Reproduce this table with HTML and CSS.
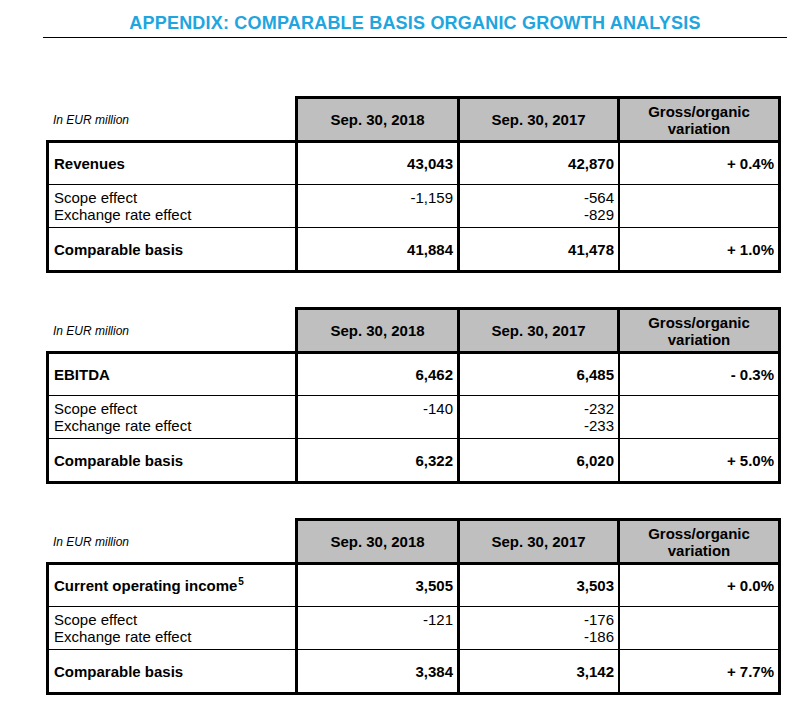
FILE: index.html
```html
<!DOCTYPE html>
<html lang="en">
<head>
<meta charset="utf-8">
<title>Appendix: Comparable basis organic growth analysis</title>
<link rel="stylesheet" href="styles.css">
</head>
<body>
<header class="title-bar">
  <h1>APPENDIX: COMPARABLE BASIS ORGANIC GROWTH ANALYSIS</h1>
</header>
<main class="tables">
  <section class="fig">
    <div class="head">
      <div class="unit">In EUR million</div>
      <div class="head-box">
        <div class="hc">Sep. 30, 2018</div>
        <div class="hc">Sep. 30, 2017</div>
        <div class="hc">Gross/organic<br>variation</div>
      </div>
    </div>
    <div class="body">
      <div class="c c1 b">Revenues</div>
      <div class="c c2 n b">43,043</div>
      <div class="c c3 n b">42,870</div>
      <div class="c c4 n b">+ 0.4%</div>
      <div class="c c1">Scope effect<br>Exchange rate effect</div>
      <div class="c c2 n">-1,159<br>&nbsp;</div>
      <div class="c c3 n">-564<br>-829</div>
      <div class="c c4 n"></div>
      <div class="c c1 b last">Comparable basis</div>
      <div class="c c2 n b last">41,884</div>
      <div class="c c3 n b last">41,478</div>
      <div class="c c4 n b last">+ 1.0%</div>
    </div>
  </section>

  <section class="fig">
    <div class="head">
      <div class="unit">In EUR million</div>
      <div class="head-box">
        <div class="hc">Sep. 30, 2018</div>
        <div class="hc">Sep. 30, 2017</div>
        <div class="hc">Gross/organic<br>variation</div>
      </div>
    </div>
    <div class="body">
      <div class="c c1 b">EBITDA</div>
      <div class="c c2 n b">6,462</div>
      <div class="c c3 n b">6,485</div>
      <div class="c c4 n b">- 0.3%</div>
      <div class="c c1">Scope effect<br>Exchange rate effect</div>
      <div class="c c2 n">-140<br>&nbsp;</div>
      <div class="c c3 n">-232<br>-233</div>
      <div class="c c4 n"></div>
      <div class="c c1 b last">Comparable basis</div>
      <div class="c c2 n b last">6,322</div>
      <div class="c c3 n b last">6,020</div>
      <div class="c c4 n b last">+ 5.0%</div>
    </div>
  </section>

  <section class="fig">
    <div class="head">
      <div class="unit">In EUR million</div>
      <div class="head-box">
        <div class="hc">Sep. 30, 2018</div>
        <div class="hc">Sep. 30, 2017</div>
        <div class="hc">Gross/organic<br>variation</div>
      </div>
    </div>
    <div class="body">
      <div class="c c1 b"><span>Current operating income<sup class="fn">5</sup></span></div>
      <div class="c c2 n b">3,505</div>
      <div class="c c3 n b">3,503</div>
      <div class="c c4 n b">+ 0.0%</div>
      <div class="c c1">Scope effect<br>Exchange rate effect</div>
      <div class="c c2 n">-121<br>&nbsp;</div>
      <div class="c c3 n">-176<br>-186</div>
      <div class="c c4 n"></div>
      <div class="c c1 b last">Comparable basis</div>
      <div class="c c2 n b last">3,384</div>
      <div class="c c3 n b last">3,142</div>
      <div class="c c4 n b last">+ 7.7%</div>
    </div>
  </section>
</main>
</body>
</html>
```

FILE: styles.css
```css
html, body {
  margin: 0;
  padding: 0;
  background: #ffffff;
}

body {
  font-family: "Liberation Sans", Arial, sans-serif;
  color: #000000;
}

.title-bar {
  margin: 0 22px 0 43px;
  padding: 13px 0 4px;
  border-bottom: 1px solid #000000;
  text-align: center;
}

.title-bar h1 {
  margin: 0;
  font-size: 18px;
  line-height: 20px;
  font-weight: bold;
  color: #21a5de;
  letter-spacing: 0.2px;
}

.tables {
  display: flex;
  flex-direction: column;
  gap: 34px;
  padding: 58px 0 0 46px;
}

.fig {
  width: 735px;
}

.head {
  display: grid;
  grid-template-columns: 249px 486px;
  height: 44px;
}

.unit {
  display: flex;
  align-items: center;
  padding: 4px 0 0 7px;
  font-size: 12px;
  font-style: italic;
}

.head-box {
  display: grid;
  grid-template-columns: 162px 160px 158px;
  border: 3px solid #000000;
  border-bottom: 0;
  background: #bfbfbf;
}

.hc {
  display: flex;
  align-items: center;
  justify-content: center;
  text-align: center;
  font-size: 15px;
  line-height: 17px;
  font-weight: bold;
  border-right: 3px solid #000000;
}

.hc:last-child {
  border-right: 0;
}

.body {
  display: grid;
  grid-template-columns: 249px 162px 160px 158px;
  grid-template-rows: 42px 43px 42px;
  border: 3px solid #000000;
}

.c {
  display: flex;
  align-items: center;
  padding: 0 4px 0 5px;
  font-size: 15px;
  line-height: 17px;
  border-bottom: 1px solid #000000;
}

.c.last {
  border-bottom: 0;
}

.c1 {
  border-right: 3px solid #000000;
}

.c2 {
  border-right: 3px solid #000000;
}

.c3 {
  border-right: 2px solid #000000;
}

.n {
  justify-content: flex-end;
  text-align: right;
}

.b {
  font-weight: bold;
}

.fn {
  font-size: 10px;
  line-height: 0;
  vertical-align: 6px;
  margin-left: 1px;
}
```
